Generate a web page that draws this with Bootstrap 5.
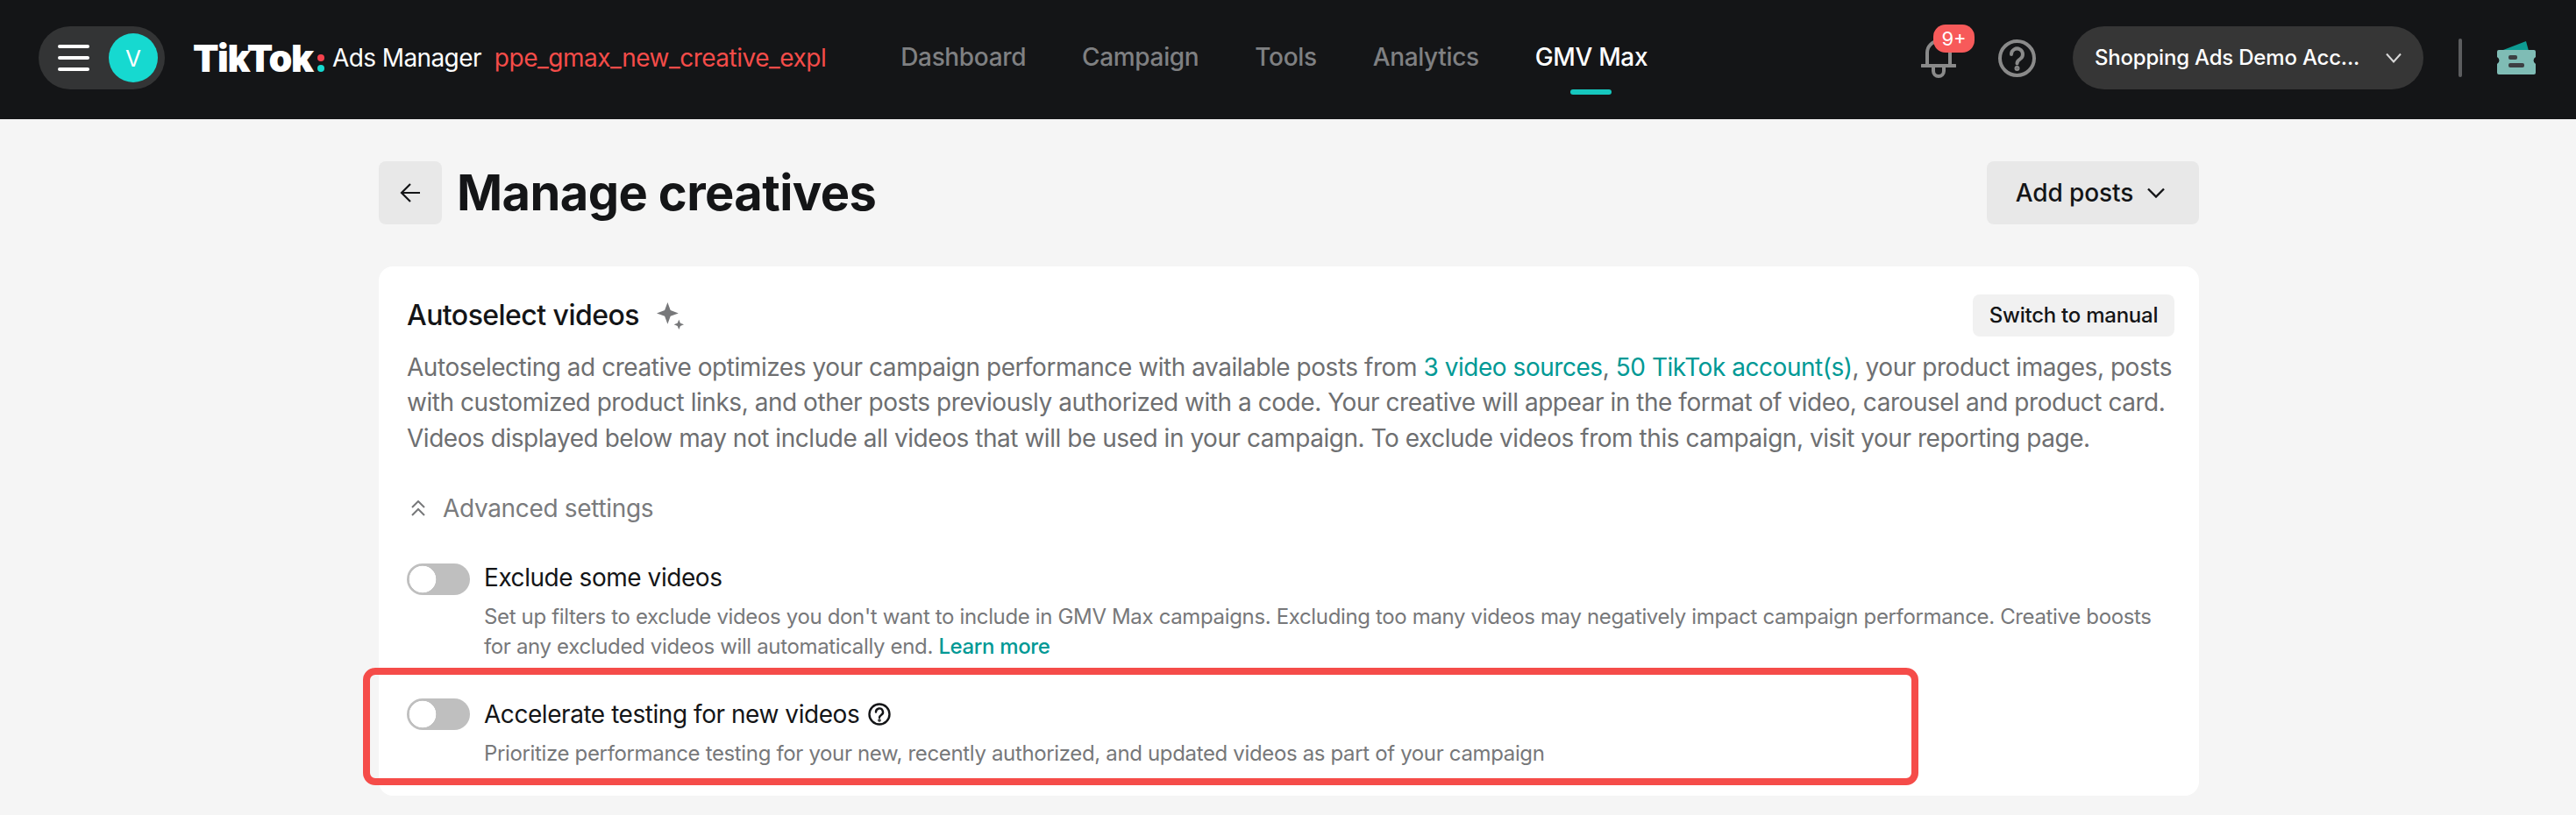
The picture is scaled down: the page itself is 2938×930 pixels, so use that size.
<!DOCTYPE html>
<html lang="en">
<head>
<meta charset="utf-8">
<title>Manage creatives</title>
<link rel="stylesheet" href="https://cdn.jsdelivr.net/npm/bootstrap@5.3.0/dist/css/bootstrap.min.css">
<style>
html,body{height:930px;overflow:hidden}
body{background:#f5f5f5;font-family:"Inter","Liberation Sans",sans-serif;color:#141517}
.topbar{height:136px;background:#141517;padding:0 46px 4px 44px}
.menu-pill{width:144px;height:72px;background:#333435;border-radius:36px;padding:0 8px 0 22px}
.burger{width:36px;height:30px;flex-direction:column;justify-content:space-between}
.burger span{display:block;height:4px;border-radius:2px;background:#fff}
.avatar{width:56px;height:56px;background:#16d9d0;color:#fff;font-size:26px}
.logo-word{font-family:"Inter",sans-serif;font-weight:900;font-size:43px;letter-spacing:-1.4px;color:#fff;margin-left:32px;line-height:1;width:142px;white-space:nowrap}
.logo-dots{width:8px;height:20px;flex-direction:column;justify-content:space-between;margin:12px 0 0 0}
.logo-dots i{display:block;width:8px;height:8px;border-radius:50%;background:#f5424d}
.logo-dots i+i{background:#16d9d0}
.logo-sub{font-size:28px;color:#fff;margin-left:9px;letter-spacing:-.6px;white-space:nowrap}
.env{font-size:28px;color:#f54c49;margin-left:15px;letter-spacing:-.5px;white-space:nowrap}
.top-nav{margin-left:85px;gap:64px}
.top-nav .nav-link{padding:0;color:#7f8082;font-size:28px;font-weight:500;position:relative;line-height:40px;letter-spacing:-.35px;top:-1px}
.top-nav .nav-link.active{color:#fff}
.top-nav .nav-link.active::after{content:"";position:absolute;left:50%;margin-left:-23.5px;width:47px;height:6px;top:57px;background:#16c7be;border-radius:3px}
.bell-wrap{width:40px;height:46px;margin-right:48px}
.bell-badge{top:-15px;left:14px;width:47px;height:32px;background:#f75a5a;border-radius:14px;color:#fff;font-size:22px;line-height:32px;text-align:center;font-weight:400}
.acct{width:400px;height:72px;border-radius:36px;background:#363636;color:#fff;font-size:24px;font-weight:500;padding:0 25px;margin-left:42px;letter-spacing:-.2px}
.acct-name{white-space:nowrap}
.v-rule{width:4px;height:44px;background:#5c5d5f;border-radius:2px;margin:0 40px 0 40px}
.page{width:2076px;margin:0 0 0 432px}
.page-head{padding-top:48px;height:168px}
.back-btn{width:72px;height:72px;background:#e8e8e8;border:0;border-radius:8px;padding:0}
.page-title{font-size:56px;font-weight:700;margin:0 0 0 17px;line-height:72px;letter-spacing:-.6px}
.add-btn{width:242px;height:72px;background:#e8e8e8;border:0;border-radius:8px;font-size:28px;font-weight:500;color:#141517;padding:0 6px 0 0;letter-spacing:-.1px}
.main-panel{height:604px;background:#fff;border:0;border-radius:16px;padding:32px 28px 0 32px}
.panel-title{font-size:32px;font-weight:500;line-height:48px;letter-spacing:-.55px;gap:20px}
.manual-btn{height:48px;width:230px;background:#f1f1f1;border:0;border-radius:8px;font-size:24px;font-weight:500;color:#141517;padding:0;letter-spacing:-.25px}
.intro{font-size:28px;line-height:40.25px;color:#6e6f71;margin:15px 0 0;white-space:nowrap;letter-spacing:-.46px}
.teal-link{color:#009995;text-decoration:none}
.adv{font-size:28px;color:#7a7b7d;line-height:40px;margin-top:40px;gap:20px;padding-left:5px;letter-spacing:-.33px}
.form-switch .switcher{width:72px;height:36px;margin:0;border:0;background-color:#bfbfbf;background-image:radial-gradient(circle at 18px 18px,#fff 15px,transparent 15.6px);background-position:0 0;background-size:auto;border-radius:18px;flex:none;float:none}
.switch-row{padding:0;margin:0;min-height:0;gap:16px}
.opt-one{margin-top:43px}
.opt-two{margin-top:42px}
.opt-label{font-size:28px;line-height:36px;font-weight:400;color:#141517;letter-spacing:-.45px}
.opt-one .opt-label{margin-top:-2px}
.opt-two .opt-label{margin-top:0}
.opt-desc{font-size:24px;line-height:34px;color:#77787a;margin:10px 0 0;white-space:nowrap;letter-spacing:-.35px}
.qmark{margin-left:2px;vertical-align:-3px}
.callout{left:414px;top:762px;width:1774px;height:134px;border:8px solid #f54c49;border-radius:14px;pointer-events:none}
</style>
</head>
<body>
<header class="topbar d-flex align-items-center">
  <div class="menu-pill d-flex align-items-center justify-content-between">
    <div class="burger d-flex"><span></span><span></span><span></span></div>
    <div class="avatar rounded-circle d-flex align-items-center justify-content-center">V</div>
  </div>
  <div class="logo-word">TikTok</div>
  <div class="logo-dots d-flex"><i></i><i></i></div>
  <div class="logo-sub">Ads Manager</div>
  <div class="env">ppe_gmax_new_creative_expl</div>
  <nav class="nav top-nav">
    <a class="nav-link" href="#">Dashboard</a>
    <a class="nav-link" href="#">Campaign</a>
    <a class="nav-link" href="#">Tools</a>
    <a class="nav-link" href="#">Analytics</a>
    <a class="nav-link active" href="#">GMV Max</a>
  </nav>
  <div class="ms-auto d-flex align-items-center">
    <div class="bell-wrap position-relative">
      <svg width="40" height="46" viewBox="0 0 40 46" fill="none" stroke="#8a8a8a" stroke-width="4" stroke-linecap="round"><path d="M7 31V17a13 13 0 0 1 26 0v14"/><path d="M1 32h38"/><path d="M14 33v5a6 6 0 0 0 12 0v-5"/></svg>
      <span class="bell-badge position-absolute">9+</span>
    </div>
    <svg width="43" height="43" viewBox="0 0 43 43" fill="none" stroke="#8a8a8a" stroke-width="4" stroke-linecap="round"><circle cx="21.5" cy="21.5" r="19.5"/><path d="M15 17a6.5 6.5 0 1 1 10 5.4c-2.3 1.5-3.5 2.6-3.5 5"/><circle cx="21.5" cy="33" r="1" fill="#8a8a8a"/></svg>
    <div class="acct d-flex align-items-center justify-content-between">
      <span class="acct-name">Shopping Ads Demo Acc...</span>
      <svg width="18" height="12" viewBox="0 0 18 12" fill="none" stroke="#d8d8d8" stroke-width="2"><path d="M1 1.5l8 9 8-9"/></svg>
    </div>
    <span class="v-rule"></span>
    <svg width="44" height="38" viewBox="0 0 44 38"><path d="M7 10L33 0l3 11H7z" fill="#0e9c93"/><path d="M2 10h40a2 2 0 0 1 2 2v6a4.5 4.5 0 0 0 0 8v10a2 2 0 0 1-2 2H2a2 2 0 0 1-2-2V26a4.5 4.5 0 0 0 0-8v-6a2 2 0 0 1 2-2z" fill="#7fbcb5"/><rect x="13" y="16" width="10" height="5" rx="2" fill="#3d3f42"/><rect x="13" y="25" width="18" height="5" rx="2" fill="#3d3f42"/></svg>
  </div>
</header>
<main class="page">
  <div class="page-head d-flex align-items-start">
    <button class="back-btn btn d-flex align-items-center justify-content-center" type="button" aria-label="Back">
      <svg width="24" height="22" viewBox="0 0 24 22" fill="none" stroke="#141517" stroke-width="2.2"><path d="M23 11H2M12 1L2 11l10 10"/></svg>
    </button>
    <h1 class="page-title">Manage creatives</h1>
    <button class="add-btn btn ms-auto d-flex align-items-center justify-content-center gap-3" type="button">Add posts
      <svg width="20" height="12" viewBox="0 0 20 12" fill="none" stroke="#141517" stroke-width="2.4"><path d="M1 1.5l9 9 9-9"/></svg>
    </button>
  </div>
  <section class="main-panel card">
    <div class="d-flex justify-content-between align-items-center">
      <div class="panel-title d-flex align-items-center">Autoselect videos
        <svg width="31" height="31" viewBox="0 0 30 30" fill="#77787a"><path d="M12 0l3.200 8.800 8.800 3.200-8.800 3.200-3.200 8.800-3.200-8.800-8.800-3.200 8.800-3.200z"/><path d="M24.500 19l1.600 3.900 3.900 1.600-3.900 1.600-1.600 3.900-1.600-3.900-3.900-1.600 3.900-1.600z"/></svg>
      </div>
      <button class="manual-btn btn" type="button">Switch to manual</button>
    </div>
    <p class="intro">Autoselecting ad creative optimizes your campaign performance with available posts from <a class="teal-link" href="#">3 video sources</a>, <a class="teal-link" href="#">50 TikTok account(s)</a>, your product images, posts<br>with customized product links, and other posts previously authorized with a code. Your creative will appear in the format of video, carousel and product card.<br>Videos displayed below may not include all videos that will be used in your campaign. To exclude videos from this campaign, visit your reporting page.</p>
    <div class="adv d-flex align-items-center">
      <svg width="16" height="18" viewBox="0 0 16 18" fill="none" stroke="#77787a" stroke-width="2"><path d="M1 8l7-7 7 7M1 17l7-7 7 7"/></svg>
      <span>Advanced settings</span>
    </div>
    <div class="form-check form-switch switch-row opt-one d-flex align-items-start">
      <input class="form-check-input switcher" type="checkbox" role="switch" id="sw1" aria-label="Exclude some videos">
      <div>
        <label class="opt-label form-check-label d-block" for="sw1">Exclude some videos</label>
        <p class="opt-desc">Set up filters to exclude videos you don't want to include in GMV Max campaigns. Excluding too many videos may negatively impact campaign performance. Creative boosts<br>for any excluded videos will automatically end. <a class="teal-link fw-medium" href="#">Learn more</a></p>
      </div>
    </div>
    <div class="form-check form-switch switch-row opt-two d-flex align-items-start">
      <input class="form-check-input switcher" type="checkbox" role="switch" id="sw2" aria-label="Accelerate testing for new videos">
      <div>
        <label class="opt-label form-check-label d-block" for="sw2">Accelerate testing for new videos
          <svg class="qmark" width="26" height="26" viewBox="0 0 26 26" fill="none" stroke="#141517" stroke-width="2.4" stroke-linecap="round"><circle cx="13" cy="13" r="11.500"/><path d="M9 10.500a4 4 0 1 1 6 3.400c-1.300.8-2 1.500-2 2.800"/><circle cx="13" cy="20" r=".6" fill="#141517"/></svg>
        </label>
        <p class="opt-desc">Prioritize performance testing for your new, recently authorized, and updated videos as part of your campaign</p>
      </div>
    </div>
  </section>
</main>
<div class="callout position-absolute"></div>
<script src="https://cdn.jsdelivr.net/npm/bootstrap@5.3.0/dist/js/bootstrap.bundle.min.js"></script>
</body>
</html>
